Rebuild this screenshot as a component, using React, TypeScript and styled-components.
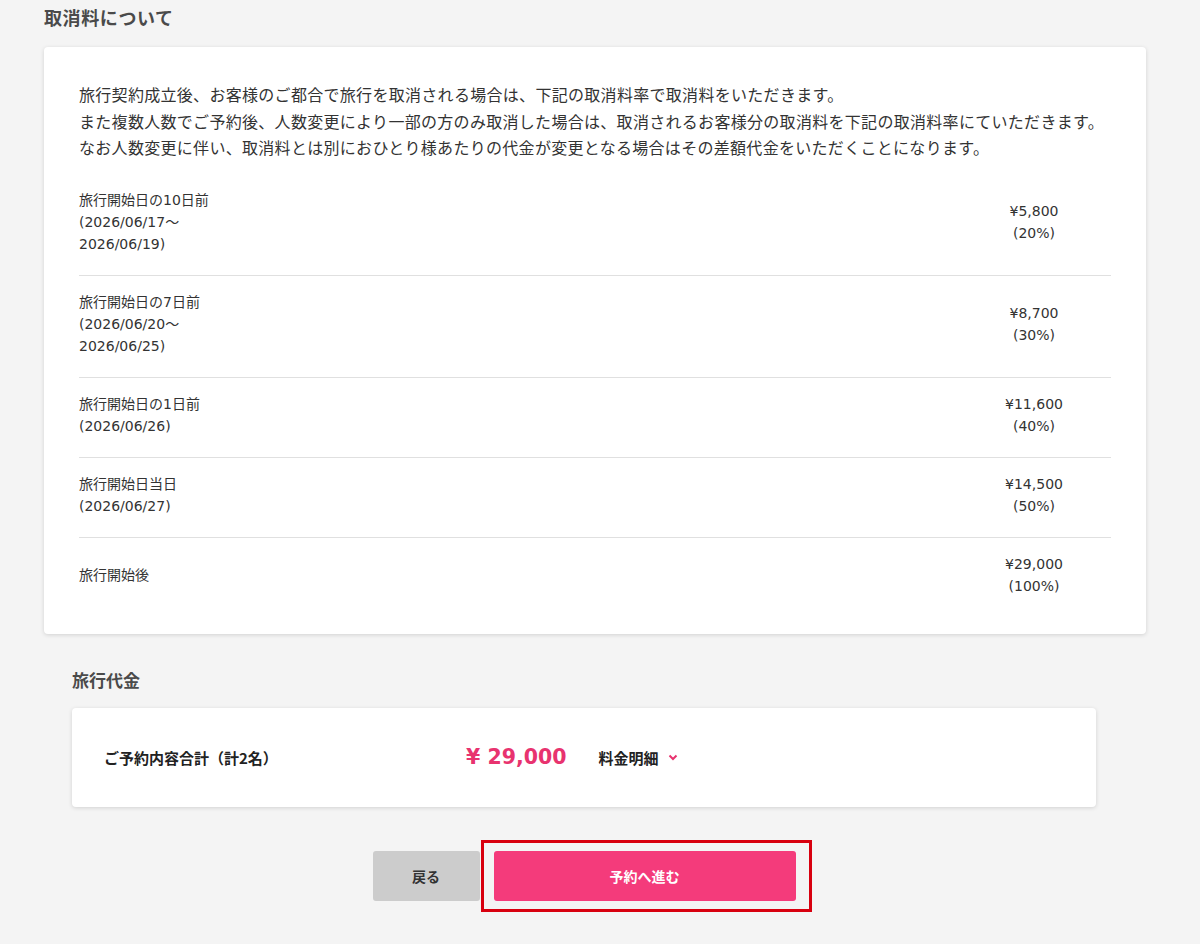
import React from 'react';
import styled, { createGlobalStyle } from 'styled-components';

const GlobalStyle = createGlobalStyle`
  html, body {
    margin: 0;
    padding: 0;
    background: #f4f4f4;
  }
  body {
    font-family: "DejaVu Sans", "Noto Sans CJK JP", sans-serif;
    color: #333;
  }
`;

const Page = styled.div`
  padding: 5px 0 30px 44px;
  width: 1102px;
`;

const SectionTitle = styled.h2<{ $size?: number; $spacing?: number }>`
  margin: 0;
  font-family: "Noto Sans CJK JP", sans-serif;
  font-size: ${p => p.$size || 18}px;
  letter-spacing: ${p => p.$spacing || 0}px;
  line-height: 24px;
  font-weight: 700;
  color: #4a4a4a;
`;

const Card = styled.div`
  background: #fff;
  border-radius: 4px;
  box-shadow: 0 1px 4px rgba(0, 0, 0, 0.14);
`;

const FeeCard = styled(Card)`
  margin-top: 18px;
  padding: 34px 35px 17px;
`;

const Intro = styled.p`
  margin: 0 0 13px;
  font-family: "Noto Sans CJK JP", sans-serif;
  font-size: 16px;
  letter-spacing: 0.3px;
  line-height: 26.5px;
  color: #333;
`;

const FeeRow = styled.div`
  display: flex;
  align-items: center;
  justify-content: space-between;
  padding: 15px 0 20px;
  border-bottom: 1px solid #e0e0e0;
  font-size: 14px;
  line-height: 22px;

  &:last-child {
    border-bottom: none;
  }
`;

const FeeLabel = styled.div`
  color: #333;
`;

const FeeAmount = styled.div`
  width: 154px;
  text-align: center;
  color: #333;
`;

const PriceSection = styled.div`
  margin: 34px 0 0 28px;
  width: 1024px;
`;

const TotalCard = styled(Card)`
  margin-top: 16px;
  height: 99px;
  padding-left: 32px;
  display: flex;
  align-items: center;
`;

const TotalLabel = styled.div`
  width: 362px;
  font-family: "Noto Sans CJK JP", sans-serif;
  font-size: 15px;
  font-weight: 700;
  color: #222;
`;

const TotalPrice = styled.div`
  font-size: 20.5px;
  font-weight: 700;
  color: #e8336f;
`;

const DetailToggle = styled.button`
  margin-left: 32px;
  display: flex;
  align-items: center;
  gap: 9px;
  border: none;
  background: none;
  padding: 0;
  font-family: "Noto Sans CJK JP", sans-serif;
  font-size: 15px;
  font-weight: 700;
  color: #222;
  cursor: pointer;
`;

const ButtonRow = styled.div`
  margin-top: 44px;
  display: flex;
  justify-content: center;
  gap: 14px;
`;

const Button = styled.button<{ $primary?: boolean }>`
  height: 50px;
  width: ${p => (p.$primary ? 302 : 107)}px;
  border: none;
  border-radius: 3px;
  background: ${p => (p.$primary ? '#f43b7b' : '#cccccc')};
  color: ${p => (p.$primary ? '#fff' : '#333')};
  font-family: "Noto Sans CJK JP", sans-serif;
  font-size: 14px;
  font-weight: 700;
  cursor: pointer;
`;

const Highlight = styled.div`
  position: relative;

  &::after {
    content: '';
    position: absolute;
    top: -11px;
    bottom: -11px;
    left: -13px;
    right: -16px;
    border: 3px solid #d8000f;
    pointer-events: none;
  }
`;

const fees = [
  { label: ['旅行開始日の10日前', '(2026/06/17～', '2026/06/19)'], amount: '¥5,800', rate: '(20%)' },
  { label: ['旅行開始日の7日前', '(2026/06/20～', '2026/06/25)'], amount: '¥8,700', rate: '(30%)' },
  { label: ['旅行開始日の1日前', '(2026/06/26)'], amount: '¥11,600', rate: '(40%)' },
  { label: ['旅行開始日当日', '(2026/06/27)'], amount: '¥14,500', rate: '(50%)' },
  { label: ['旅行開始後'], amount: '¥29,000', rate: '(100%)' },
];

const Chevron = () => (
  <svg width="10" height="7" viewBox="0 0 10 7">
    <polyline points="1.5,1.5 5,5 8.5,1.5" fill="none" stroke="#e8336f" strokeWidth="2" />
  </svg>
);

const App = () => {
  return (
    <>
      <GlobalStyle />
      <Page>
        <SectionTitle $spacing={0.6}>取消料について</SectionTitle>
        <FeeCard>
          <Intro>
            旅行契約成立後、お客様のご都合で旅行を取消される場合は、下記の取消料率で取消料をいただきます。
            <br />
            また複数人数でご予約後、人数変更により一部の方のみ取消した場合は、取消されるお客様分の取消料を下記の取消料率にていただきます。
            <br />
            なお人数変更に伴い、取消料とは別におひとり様あたりの代金が変更となる場合はその差額代金をいただくことになります。
          </Intro>
          {fees.map(f => (
            <FeeRow key={f.amount}>
              <FeeLabel>
                {f.label.map((l, i) => (
                  <div key={i}>{l}</div>
                ))}
              </FeeLabel>
              <FeeAmount>
                <div>{f.amount}</div>
                <div>{f.rate}</div>
              </FeeAmount>
            </FeeRow>
          ))}
        </FeeCard>

        <PriceSection>
          <SectionTitle $size={17}>旅行代金</SectionTitle>
          <TotalCard>
            <TotalLabel>ご予約内容合計（計2名）</TotalLabel>
            <TotalPrice>¥ 29,000</TotalPrice>
            <DetailToggle>
              料金明細
              <Chevron />
            </DetailToggle>
          </TotalCard>
          <ButtonRow>
            <Button>戻る</Button>
            <Highlight>
              <Button $primary>予約へ進む</Button>
            </Highlight>
          </ButtonRow>
        </PriceSection>
      </Page>
    </>
  );
};

export default App;
